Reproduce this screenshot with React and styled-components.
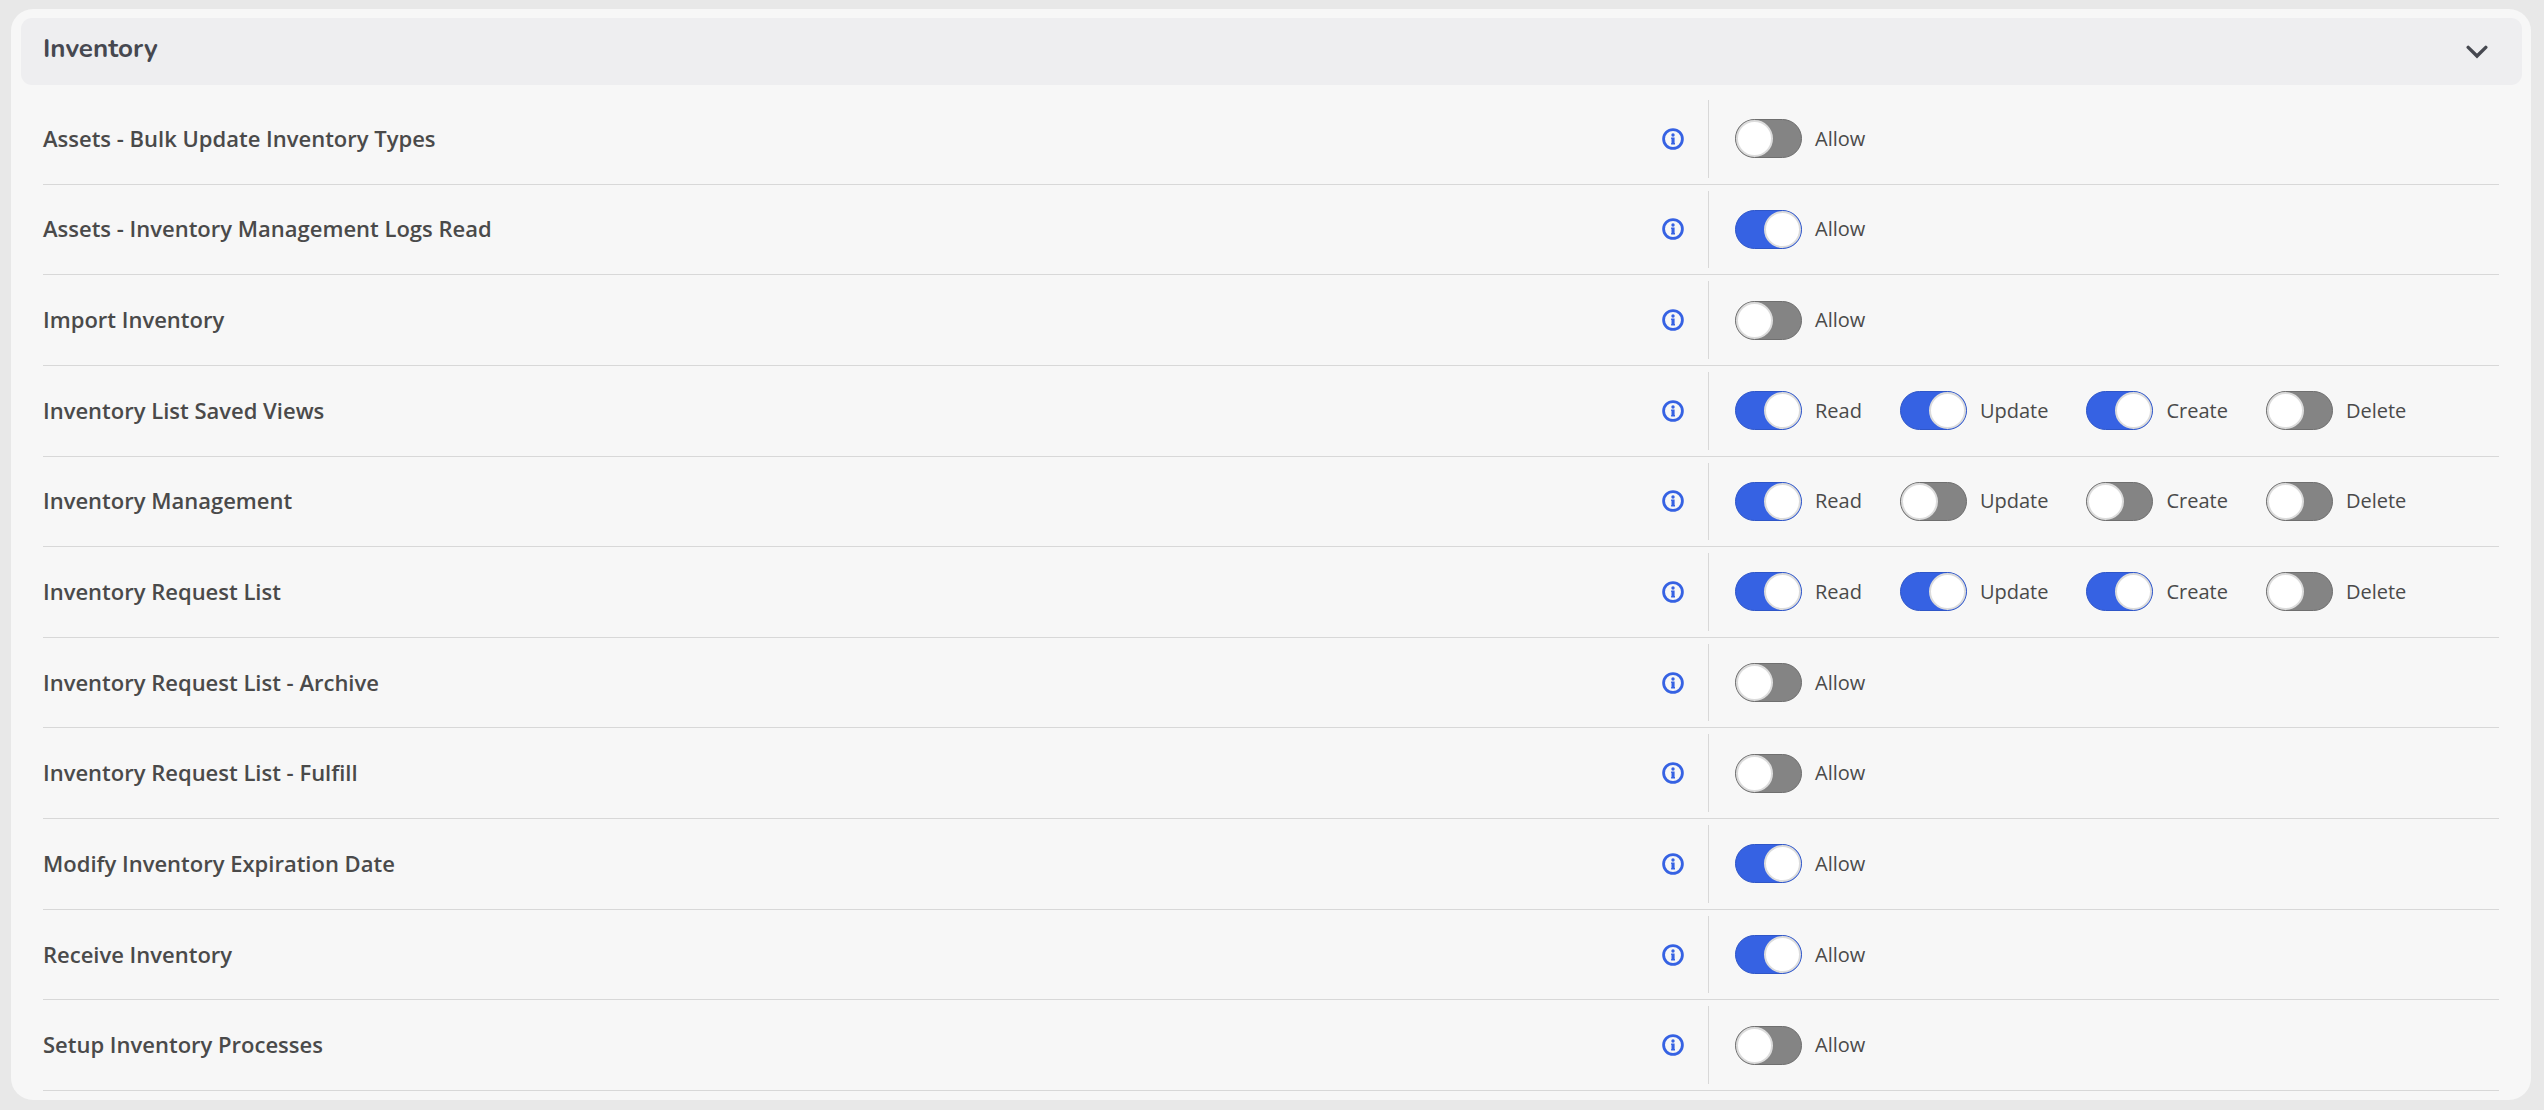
import { useState } from "react";
import styled, { createGlobalStyle } from "styled-components";

const initialPermissions = [
  { name: "Assets - Bulk Update Inventory Types", actions: { Allow: false } },
  { name: "Assets - Inventory Management Logs Read", actions: { Allow: true } },
  { name: "Import Inventory", actions: { Allow: false } },
  { name: "Inventory List Saved Views", actions: { Read: true, Update: true, Create: true, Delete: false } },
  { name: "Inventory Management", actions: { Read: true, Update: false, Create: false, Delete: false } },
  { name: "Inventory Request List", actions: { Read: true, Update: true, Create: true, Delete: false } },
  { name: "Inventory Request List - Archive", actions: { Allow: false } },
  { name: "Inventory Request List - Fulfill", actions: { Allow: false } },
  { name: "Modify Inventory Expiration Date", actions: { Allow: true } },
  { name: "Receive Inventory", actions: { Allow: true } },
  { name: "Setup Inventory Processes", actions: { Allow: false } },
];

function ChevronIcon() {
  return (
    <svg width="22" height="14" viewBox="0 0 22 14" fill="none" aria-hidden="true">
      <path d="M2.2 2.4 11 11 19.8 2.4" stroke="currentColor" strokeWidth="3.4" strokeLinecap="round" />
    </svg>
  );
}

function InfoIcon() {
  return (
    <svg width="22" height="22" viewBox="0 0 22 22" aria-hidden="true">
      <circle cx="11" cy="11" r="9.4" fill="none" stroke="currentColor" strokeWidth="2.8" />
      <circle cx="11" cy="7" r="1.7" fill="currentColor" />
      <path d="M9.1 9.5h3.5v5.4h.4v1.7H9.1v-1.7h.4v-3.8h-.4z" fill="currentColor" />
    </svg>
  );
}

export default function App() {
  const [open, setOpen] = useState(true);
  const [permissions, setPermissions] = useState(initialPermissions);

  const toggle = (name, action) => {
    setPermissions((list) =>
      list.map((item) =>
        item.name === name
          ? { ...item, actions: { ...item.actions, [action]: !item.actions[action] } }
          : item
      )
    );
  };

  return (
    <Page>
      <GlobalStyle />
      <Card>
        <Header type="button" aria-expanded={open} onClick={() => setOpen(!open)}>
          <Title>Inventory</Title>
          <Chevron $open={open}><ChevronIcon /></Chevron>
        </Header>
        {open && (
          <PermissionList>
            {permissions.map(({ name, actions }) => (
              <Row key={name}>
                <Name>{name}</Name>
                <InfoButton type="button" aria-label={`About ${name}`}><InfoIcon /></InfoButton>
                <Actions>
                  {Object.entries(actions).map(([action, checked]) => (
                    <Action key={action}>
                      <Switch
                        type="checkbox"
                        role="switch"
                        checked={checked}
                        onChange={() => toggle(name, action)}
                      />
                      <ActionText>{action}</ActionText>
                    </Action>
                  ))}
                </Actions>
              </Row>
            ))}
          </PermissionList>
        )}
      </Card>
    </Page>
  );
}

const GlobalStyle = createGlobalStyle`
  *, *::before {
    box-sizing: border-box;
  }

  body {
    margin: 0;
    background: #e8e8e8;
    color: #4a4a4a;
    font-family: "Open Sans", "Noto Sans", sans-serif;
  }
`;

const Page = styled.main`
  display: flex;
  min-height: 100vh;
  padding: 9px 13px 10px 11px;
`;

const Card = styled.section`
  display: flex;
  flex-direction: column;
  flex: 1;
  padding: 9px 9px 9px 10px;
  border-radius: 22px;
  background: #f7f7f7;
`;

const Header = styled.button`
  display: flex;
  align-items: center;
  justify-content: space-between;
  height: 67px;
  padding: 0 34px 0 22px;
  border: none;
  border-radius: 11px;
  background: #eeeef0;
  color: #464850;
  font-family: Nunito, Lato, sans-serif;
  cursor: pointer;
`;

const Title = styled.span`
  padding-bottom: 6px;
  font-size: 26px;
  font-weight: 700;
  line-height: 32px;
`;

const Chevron = styled.span`
  display: flex;
  transform: ${({ $open }) => ($open ? "none" : "rotate(-90deg)")};
`;

const PermissionList = styled.ul`
  display: grid;
  grid-auto-rows: 1fr;
  flex: 1;
  margin: 9px 23px 0 22px;
  padding: 0;
  list-style: none;
`;

const Row = styled.li`
  display: grid;
  grid-template-columns: minmax(0, 1fr) auto 791px;
  align-items: center;
  min-height: 80px;
  border-bottom: 1px solid #d8d8d8;
`;

const Name = styled.span`
  padding-bottom: 2px;
  font-size: 22px;
  font-weight: 600;
  line-height: 30px;
`;

const InfoButton = styled.button`
  display: flex;
  margin-right: 24px;
  padding: 0;
  border: none;
  background: none;
  color: #3662e3;
  cursor: pointer;
`;

const Actions = styled.div`
  display: flex;
  align-items: center;
  align-self: stretch;
  gap: 38px;
  margin: 6px 0;
  padding-left: 26px;
  border-left: 1px solid #d8d8d8;
`;

const Action = styled.label`
  display: flex;
  align-items: center;
  gap: 13px;
  cursor: pointer;
`;

const ActionText = styled.span`
  font-size: 20px;
  line-height: 28px;
`;

const Switch = styled.input`
  appearance: none;
  display: flex;
  align-items: center;
  width: 67px;
  height: 39px;
  margin: 0;
  border: 1px solid #6f6f6f;
  border-radius: 20px;
  background: #848484;
  cursor: pointer;

  &::before {
    content: "";
    width: 37px;
    height: 37px;
    border: 2px solid #dcdcdc;
    border-radius: 50%;
    background: #fff;
  }

  &:checked {
    justify-content: flex-end;
    border-color: #2f56c8;
    background: #3662e3;
  }
`;
